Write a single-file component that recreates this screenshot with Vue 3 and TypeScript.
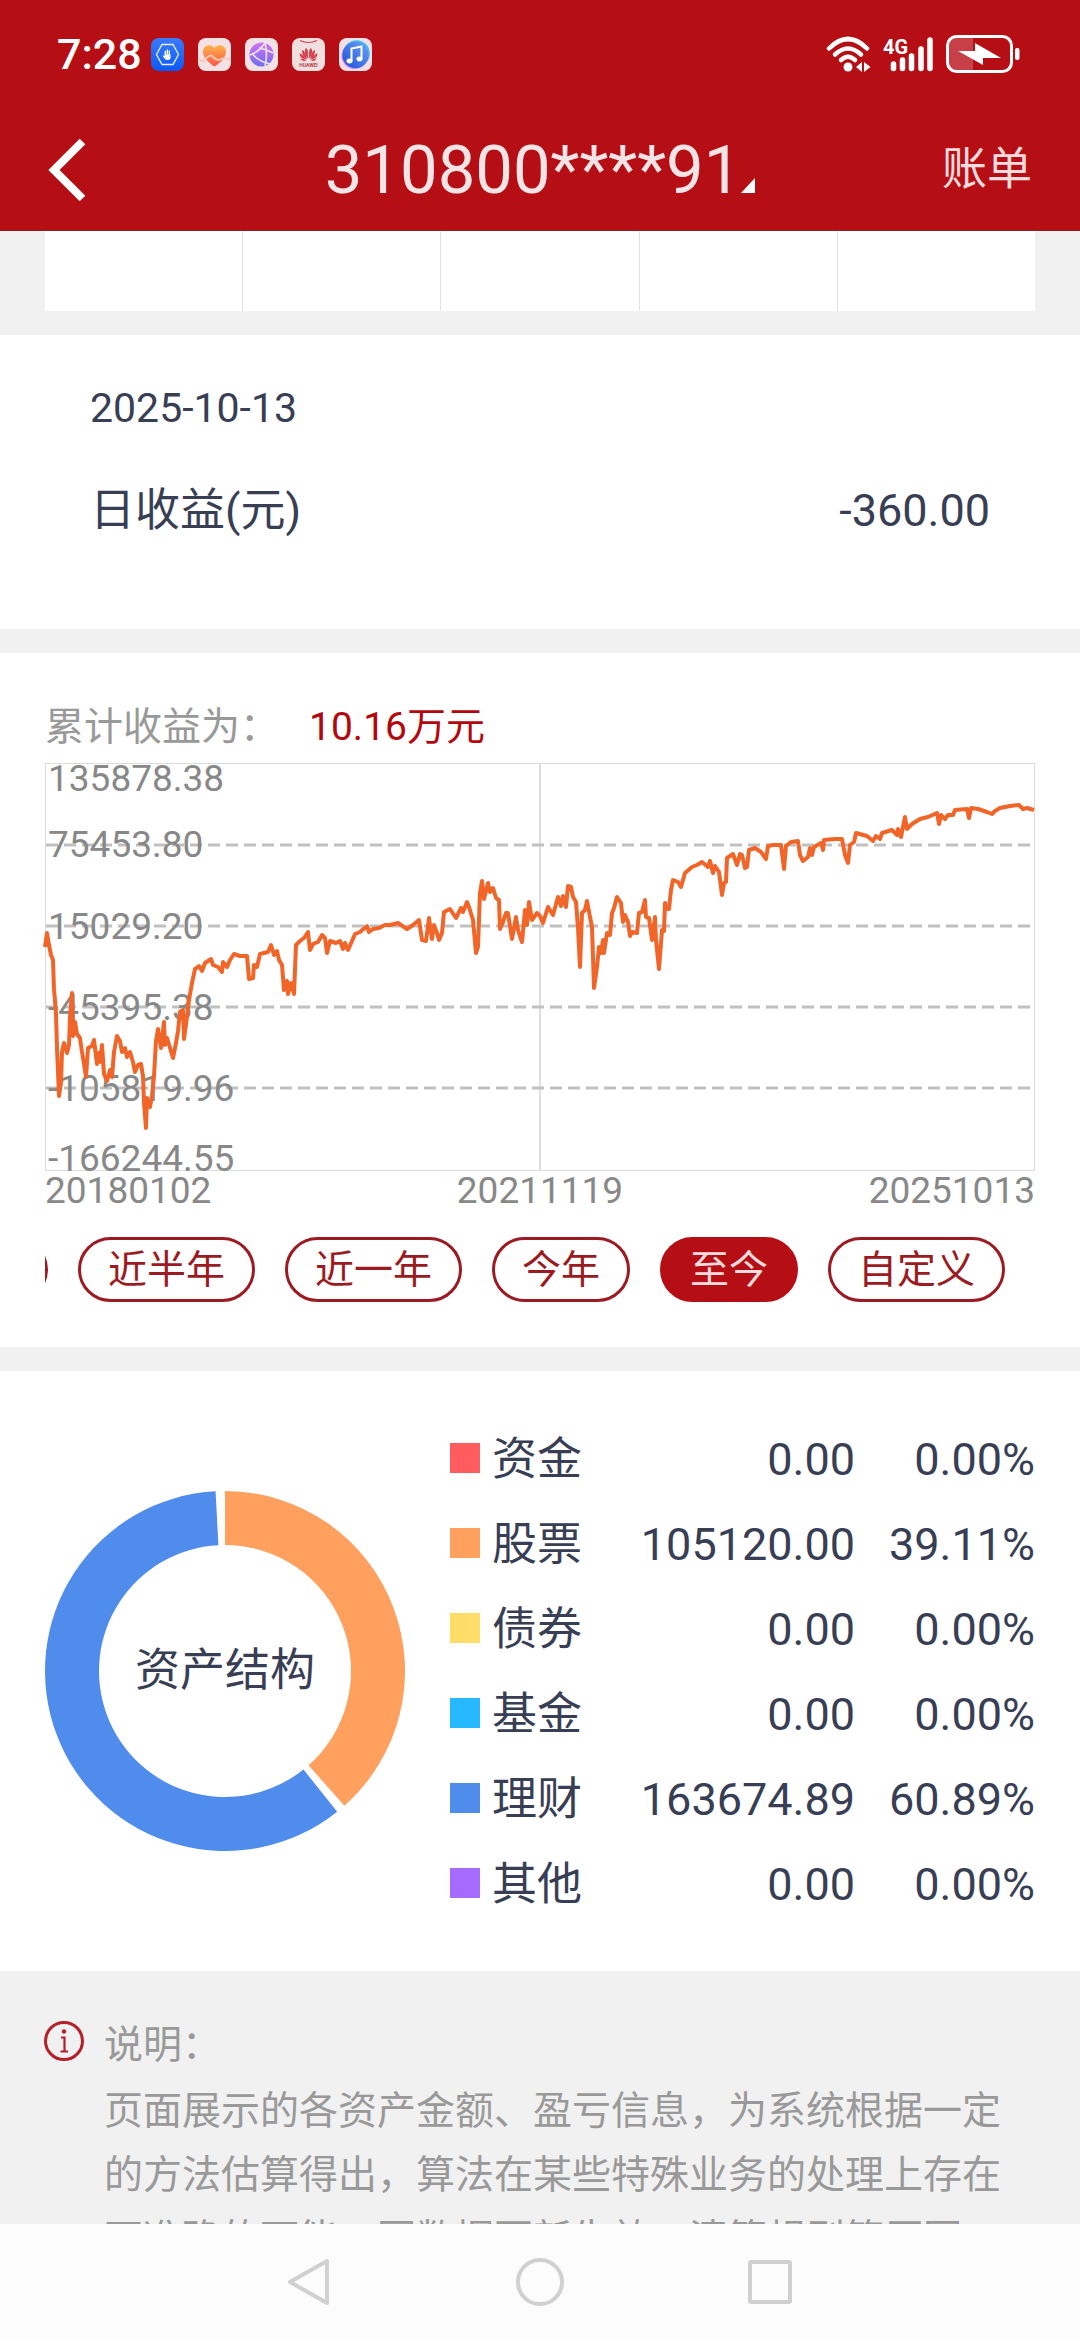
<script setup lang="ts">
import { ref } from 'vue'

interface Asset {
  name: string
  amount: string
  share: string
  color: string
}

const ranges: string[] = ['近三月', '近半年', '近一年', '今年', '至今', '自定义']
const activeRange = ref<string>('至今')

const assets: Asset[] = [
  { name: '资金', amount: '0.00', share: '0.00%', color: '#ff5c5f' },
  { name: '股票', amount: '105120.00', share: '39.11%', color: '#ffa05f' },
  { name: '债券', amount: '0.00', share: '0.00%', color: '#ffdd66' },
  { name: '基金', amount: '0.00', share: '0.00%', color: '#27b9ff' },
  { name: '理财', amount: '163674.89', share: '60.89%', color: '#4f8cec' },
  { name: '其他', amount: '0.00', share: '0.00%', color: '#a56bff' },
]

const gridLines: number[] = [82, 163, 244, 325]
const axisLabels: { text: string; y: number }[] = [
  { text: '135878.38', y: 28 },
  { text: '75453.80', y: 94 },
  { text: '15029.20', y: 176 },
  { text: '-45395.38', y: 257 },
  { text: '-105819.96', y: 338 },
  { text: '-166244.55', y: 408 },
]
const dates: string[] = ['20180102', '20211119', '20251013']

const profitLine = `
0,184 2,170 4,182 6,192 8,197 9,227 10,237 11,251 12,285 14,333 16,320 17,289 19,280 22,290 24,282 25,254
27,230 28,273 30,259 32,271 35,275 37,289 39,301 41,314 43,285 47,283 49,277 52,301 54,290 55,299 57,282
59,311 62,318 65,307 67,314 69,289 72,273 75,278 77,289 80,285 82,294 85,289 88,299 90,309 93,302 96,301
98,313 99,340 101,365 102,335 105,344 107,333 109,313 111,278 113,266 116,285 119,259 120,282 122,275
125,285 128,295 131,280 133,268 135,249 138,247 139,276 142,254 144,237 147,220 150,206 154,203 157,208
160,200 166,196 168,202 173,204 177,209 178,199 182,204 185,197 189,191 195,193 202,193 204,216 208,215
209,202 212,204 215,191 223,189 226,182 229,192 232,188 234,197 237,202 239,227 242,218 243,231 246,220
249,231 251,182 255,178 259,175 263,169 265,187 268,181 273,179 277,172 280,175 282,190 285,178 291,180
295,178 298,186 300,180 303,187 307,178 310,171 315,169 322,163 324,169 328,166 334,165 340,162 345,162
353,160 362,166 368,162 374,157 377,177 381,178 384,155 387,176 389,162 392,170 394,177 397,170 399,149
405,146 411,155 416,145 418,149 422,139 424,144 428,157 431,190 433,184 435,130 437,118 439,136 443,120
445,129 448,125 451,135 454,137 455,166 458,159 461,150 463,150 467,176 471,154 473,167 477,179 480,147
482,162 484,139 487,157 492,150 495,153 498,160 503,144 508,152 513,134 516,143 518,133 521,144 523,123
526,124 528,134 531,139 533,165 535,204 537,150 540,147 542,138 545,154 547,164 548,194 549,225 552,204
554,184 556,190 558,177 559,190 562,170 565,172 567,150 569,145 572,134 576,140 578,159 580,152 583,159
585,173 587,169 592,170 594,150 597,149 600,137 601,154 604,155 607,177 610,154 611,177 614,206 617,167
619,168 620,140 622,146 624,146 626,127 628,117 633,119 636,124 640,110 647,104 652,102 657,99 663,104
665,98 668,110 670,103 674,109 676,124 677,132 679,120 681,119 682,95 688,91 692,102 695,91 697,92
700,105 702,104 704,87 710,85 716,89 721,96 723,83 728,82 736,82 739,106 741,83 746,79 753,78 755,92
758,98 763,94 765,85 767,92 769,84 776,80 778,87 779,77 790,76 797,76 800,92 803,100 805,82 809,79
811,70 822,73 828,78 831,73 835,76 837,70 847,67 852,72 853,66 856,74 860,54 862,66 867,61 875,56
883,54 892,50 894,61 896,52 900,56 903,52 908,52 910,47 922,46 924,55 926,45 933,46 942,49 947,51
950,48 955,45 965,43 974,42 978,46 982,45 989,47`

const gapDegrees = 3
const donutSlices = (() => {
  const held = assets.filter((a) => parseFloat(a.share) > 0)
  const usable = 360 - gapDegrees * held.length
  const point = (deg: number, r: number): string => {
    const rad = (deg * Math.PI) / 180
    return `${(180 + r * Math.sin(rad)).toFixed(2)} ${(180 - r * Math.cos(rad)).toFixed(2)}`
  }
  let start = 0
  return held.map((a) => {
    const end = start + (parseFloat(a.share) / 100) * usable
    const large = end - start > 180 ? 1 : 0
    const d =
      `M${point(start, 180)} A180 180 0 ${large} 1 ${point(end, 180)} ` +
      `L${point(end, 126)} A126 126 0 ${large} 0 ${point(start, 126)} Z`
    start = end + gapDegrees
    return { d, color: a.color }
  })
})()
</script>

<template>
  <div class="screen">
    <header class="header">
      <div class="status">
        <span class="clock">7:28</span>
        <div class="apps">
          <svg class="app-icon" viewBox="0 0 33 33" aria-hidden="true">
            <defs>
              <linearGradient id="guard" x1="0" y1="0" x2="0" y2="1">
                <stop offset="0" stop-color="#3b7bfa" />
                <stop offset="1" stop-color="#0b59f5" />
              </linearGradient>
            </defs>
            <rect width="33" height="33" rx="8" fill="url(#guard)" />
            <path d="M11 6.500h11l5.500 10-5.500 10H11l-5.500-10z" fill="none" stroke="#e8f1ff" stroke-width="1.300" />
            <path d="M14.300 17v-3.500M16.300 16v-4M18.300 17v-4" stroke="#fff" stroke-width="1.400" stroke-linecap="round" />
            <path d="M13.600 16.500H19.500v3q0 2.500-3 2.500-2 0-2.800-1.500L11.500 18q.8-1 2.100.3z" fill="#fff" />
          </svg>
          <svg class="app-icon" viewBox="0 0 33 33" aria-hidden="true">
            <defs>
              <linearGradient id="heart" x1="0" y1="0" x2="0" y2="1">
                <stop offset="0" stop-color="#fdb347" />
                <stop offset="1" stop-color="#fb5548" />
              </linearGradient>
            </defs>
            <rect width="33" height="33" rx="8" fill="#f3e1e3" />
            <path d="M16.500 28.500C9 23.500 5 18.500 5 13.500 5 7 13 5 16.500 10 20 5 28 7 28 13.500c0 5-4 10-11.500 15z" fill="url(#heart)" />
            <path d="M1 20q2 4.500 5 2.500c3-2 5-7 8-4.500s5 5.500 8 3.500 4-1 10-.5" fill="none" stroke="#f6c9b8" stroke-width="1.800" />
          </svg>
          <svg class="app-icon" viewBox="0 0 33 33" aria-hidden="true">
            <defs>
              <linearGradient id="globe" x1="0" y1="0" x2="0" y2="1">
                <stop offset="0" stop-color="#cf74ef" />
                <stop offset="1" stop-color="#6d6cf0" />
              </linearGradient>
            </defs>
            <rect width="33" height="33" rx="8" fill="#f3e1e3" />
            <circle cx="16.500" cy="16.500" r="12" fill="url(#globe)" />
            <path d="M5 17Q14 14 20 5M7 15q5 8 18 11M20 5q3 12 0 23M14 10q7 1 14 5" fill="none" stroke="#f3e1f3" stroke-width="1.600" />
          </svg>
          <svg class="app-icon" viewBox="0 0 33 33" aria-hidden="true">
            <rect width="33" height="33" rx="8" fill="#f1dfe0" />
            <path d="M8 2.500q8.500 4 17 0" fill="none" stroke="#cf3f4c" stroke-width="1.200" />
            <g fill="#d63e4b">
              <path d="M16 21q-4.500-6-2.500-10.500 3-1.500 2.500 10.500zM17 21q4.500-6 2.500-10.500-3-1.500-2.500 10.500z" />
              <path d="M15 21.500Q9 17 10.200 12q3 .5 4.800 9.500zM18 21.500q6-4.500 4.800-9.500-3 .5-4.800 9.500z" />
              <path d="M14.500 22Q7.500 20 7.500 15.500q3.500.5 7 6.500zM18.500 22q7-2 7-6.500-3.500.5-7 6.500z" />
              <path d="M14 22.700q-4.500 1-5.700-2.200 3-.5 5.700 2.200zM19 22.700q4.500 1 5.700-2.200-3-.5-5.700 2.200z" />
            </g>
            <text x="16.500" y="28.500" text-anchor="middle" class="brand">HUAWEI</text>
          </svg>
          <svg class="app-icon" viewBox="0 0 33 33" aria-hidden="true">
            <defs>
              <linearGradient id="music" x1="1" y1="0" x2="0" y2="1">
                <stop offset="0" stop-color="#6fa0f5" />
                <stop offset="1" stop-color="#1a50d8" />
              </linearGradient>
            </defs>
            <rect width="33" height="33" rx="8" fill="#f3dfe6" />
            <circle cx="15.500" cy="18" r="13" fill="#e58af0" />
            <circle cx="17.500" cy="15.500" r="13.300" fill="#36c3ef" />
            <circle cx="16.500" cy="17" r="13.200" fill="url(#music)" />
            <path d="M12.500 23V10.500l10-2V21" fill="none" stroke="#fff" stroke-width="2" />
            <ellipse cx="10.500" cy="23" rx="3" ry="2.400" fill="#fff" />
            <ellipse cx="20.500" cy="21" rx="3" ry="2.400" fill="#fff" />
          </svg>
        </div>
        <div class="signals">
          <svg class="wifi" viewBox="0 0 45 36" aria-hidden="true">
            <g fill="none" stroke="#fff" stroke-width="4.500" stroke-linecap="round">
              <path d="M3 12.500Q22 -6.500 41 12.500" />
              <path d="M9 18.500q13-12 26 0" />
              <path d="M15 24q7-6.500 14 0" />
            </g>
            <circle cx="22" cy="31" r="4.500" fill="#fff" />
            <path d="M30 31l6-5v10zM38 26l6.500 5-6.500 5z" fill="#fff" />
          </svg>
          <svg class="cell" viewBox="0 0 51 36" aria-hidden="true">
            <text x="0" y="18" class="network">4G</text>
            <g stroke="#fff" stroke-width="5.500" stroke-linecap="round">
              <path d="M10.500 28v4.500M19.500 24v8.500M28.500 20v12.500M38 13v19.500M47 4v28.500" />
            </g>
          </svg>
          <svg class="battery" viewBox="0 0 74 38" aria-hidden="true">
            <path d="M3 10q0-7 7-7h17v32H10q-7 0-7-7z" fill="#c74048" />
            <rect x="1.500" y="1.500" width="64" height="35" rx="9" fill="none" stroke="#fff" stroke-width="3" />
            <rect x="69" y="13" width="4.500" height="12" rx="2" fill="#fff" />
            <path d="M12 16h17V8l26 15H37v7z" fill="#fff" />
          </svg>
        </div>
      </div>
      <div class="titlebar">
        <button class="back" type="button" aria-label="返回">
          <svg viewBox="0 0 38 64" aria-hidden="true">
            <path d="M34.500 3.500L6 32l28.500 28.500" fill="none" stroke="#fff" stroke-width="8" />
          </svg>
        </button>
        <button class="account" type="button">
          <span>310800****91</span>
          <svg viewBox="0 0 14 15" aria-hidden="true"><path d="M14 0v15H0z" fill="#fff" /></svg>
        </button>
        <a class="bill" href="#">账单</a>
      </div>
    </header>

    <main class="content">
      <div class="calendar-row">
        <span v-for="n in 5" :key="n" class="day"></span>
      </div>

      <section class="daily">
        <div class="daily-date">2025-10-13</div>
        <div class="daily-row">
          <span>日收益(元)</span>
          <span>-360.00</span>
        </div>
      </section>

      <section class="trend">
        <div class="trend-head">
          <span>累计收益为：</span>
          <strong>10.16万元</strong>
        </div>
        <svg class="plot" viewBox="0 0 990 408" role="img" aria-label="累计收益走势">
          <rect x="0.500" y="0.500" width="989" height="407" fill="none" stroke="#dcdcdc" />
          <path d="M495 0V408" stroke="#dedede" stroke-width="2" />
          <path v-for="y in gridLines" :key="y" :d="`M1 ${y}H986`" class="grid-line" />
          <text v-for="l in axisLabels" :key="l.text" x="3" :y="l.y" class="axis">{{ l.text }}</text>
          <polyline :points="profitLine" class="profit" />
        </svg>
        <div class="dates">
          <span v-for="d in dates" :key="d">{{ d }}</span>
        </div>
        <div class="ranges">
          <button
            v-for="r in ranges"
            :key="r"
            type="button"
            class="chip"
            :class="{ active: r === activeRange }"
            @click="activeRange = r"
          >{{ r }}</button>
        </div>
      </section>

      <section class="assets">
        <div class="donut">
          <svg viewBox="0 0 360 360" aria-hidden="true">
            <path v-for="s in donutSlices" :key="s.color" :d="s.d" :fill="s.color" />
          </svg>
          <span class="donut-label">资产结构</span>
        </div>
        <table class="legend">
          <tbody>
            <tr v-for="a in assets" :key="a.name">
              <th scope="row">
                <span class="name"><i class="swatch" :style="{ background: a.color }"></i>{{ a.name }}</span>
              </th>
              <td>{{ a.amount }}</td>
              <td class="share">{{ a.share }}</td>
            </tr>
          </tbody>
        </table>
      </section>

      <section class="note">
        <svg class="info" viewBox="0 0 40 40" aria-hidden="true">
          <circle cx="20" cy="20" r="18.500" fill="none" stroke="#b3202a" stroke-width="3" />
          <circle cx="20" cy="10.500" r="2.200" fill="#b3202a" />
          <path d="M17 16.500h3.500V30M16.500 30.500h7.500" fill="none" stroke="#b3202a" stroke-width="2.200" />
        </svg>
        <div class="note-text">
          <div class="note-title">说明：</div>
          <p>页面展示的各资产金额、盈亏信息，为系统根据一定的方法估算得出，算法在某些特殊业务的处理上存在不准确的可能，因数据更新失效、清算规则等原因，</p>
        </div>
      </section>
    </main>

    <nav class="navbar">
      <button type="button" aria-label="返回上一页">
        <svg viewBox="0 0 48 48"><path d="M41 3v42L4 24z" /></svg>
      </button>
      <button type="button" aria-label="主屏幕">
        <svg viewBox="0 0 48 48"><circle cx="24" cy="24" r="22" /></svg>
      </button>
      <button type="button" aria-label="最近任务">
        <svg viewBox="0 0 48 48"><rect x="4" y="4" width="40" height="40" rx="1" /></svg>
      </button>
    </nav>
  </div>
</template>

<style>
body {
  background: #f1f1f1;
}
</style>

<style scoped>
.screen {
  display: flex;
  flex-direction: column;
  height: 100vh;
  background: #f1f1f1;
  color: #383e54;
  font-family: Roboto, "Noto Sans CJK SC", sans-serif;
  font-size: 45px;
}

button {
  margin: 0;
  padding: 0;
  border: 0;
  background: none;
  color: inherit;
  font: inherit;
}

svg {
  display: block;
}

.header {
  flex: none;
  background: #b50f15;
  border-bottom: 1px solid #8c2026;
  color: #fff;
}

.status {
  display: flex;
  align-items: center;
  height: 108px;
  padding: 0 60px 0 57px;
}

.clock {
  width: 94px;
  font-size: 43px;
  font-weight: 500;
  line-height: 60px;
}

.apps {
  display: flex;
  gap: 14px;
}

.app-icon {
  width: 33px;
  height: 33px;
}

.brand {
  fill: #b8404a;
  font-size: 5px;
  font-weight: 700;
}

.signals {
  display: flex;
  align-items: center;
  gap: 12px;
  margin-left: auto;
}

.wifi {
  width: 45px;
  height: 36px;
}

.cell {
  width: 51px;
  height: 36px;
}

.network {
  fill: #fff;
  font-size: 20px;
  font-weight: 700;
}

.battery {
  width: 74px;
  height: 38px;
}

.titlebar {
  display: grid;
  grid-template-columns: 1fr auto 1fr;
  align-items: center;
  height: 120px;
  padding: 2px 48px 0;
}

.back {
  justify-self: start;
}

.back svg {
  width: 38px;
  height: 64px;
}

.account {
  display: flex;
  align-items: baseline;
  color: #f4e4e6;
  font-size: 67px;
  line-height: 80px;
}

.account svg {
  width: 14px;
  height: 15px;
}

.bill {
  justify-self: end;
  color: #fbdcde;
  line-height: 60px;
  text-decoration: none;
}

.content {
  flex: 1;
  min-height: 0;
  overflow: hidden;
}

.calendar-row {
  display: flex;
  height: 80px;
  margin: 0 45px 24px;
  background: #fff;
}

.day {
  flex: 1;
}

.day + .day {
  border-left: 1px solid #e2e2e2;
}

.daily {
  padding: 43px 90px 85px;
  background: #fff;
}

.daily-date {
  margin-bottom: 40px;
  font-size: 41px;
  line-height: 60px;
}

.daily-row {
  display: flex;
  justify-content: space-between;
  line-height: 66px;
}

.trend {
  margin: 24px 0;
  padding: 44px 45px 45px;
  background: #fff;
}

.trend-head {
  display: flex;
  gap: 30px;
  margin-bottom: 6px;
  color: #999;
  font-size: 39px;
  line-height: 60px;
}

.trend-head strong {
  color: #b4060d;
  font-weight: 400;
}

.plot {
  width: 100%;
  overflow: visible;
}

.grid-line {
  stroke: #c0c0c0;
  stroke-width: 3;
  stroke-dasharray: 12 6;
}

.axis {
  fill: #888;
  font-size: 37px;
}

.profit {
  fill: none;
  stroke: #f26529;
  stroke-width: 4;
  stroke-linejoin: round;
}

.dates {
  display: flex;
  justify-content: space-between;
  margin-bottom: 26px;
  color: #888;
  font-size: 37px;
  line-height: 40px;
}

.ranges {
  display: flex;
  justify-content: flex-end;
  gap: 30px;
  padding-right: 30px;
  overflow: hidden;
}

.chip {
  flex: none;
  height: 65px;
  padding: 2px 27px 0;
  border: 3px solid #9c1a21;
  border-radius: 33px;
  color: #9c1a21;
  font-size: 39px;
  line-height: 57px;
}

.chip.active {
  border-color: #b50f15;
  background: #b50f15;
  color: #fbdcde;
}

.assets {
  display: flex;
  align-items: center;
  gap: 45px;
  padding: 45px;
  background: #fff;
}

.donut {
  display: grid;
  flex: none;
  place-items: center;
  width: 360px;
}

.donut svg,
.donut-label {
  grid-area: 1 / 1;
}

.donut svg {
  width: 100%;
}

.donut-label {
  line-height: 60px;
}

.legend {
  flex: 1;
  border-collapse: collapse;
}

.legend tr {
  height: 85px;
}

.legend th,
.legend td {
  padding: 2px 0 0;
  font-weight: 400;
  line-height: 60px;
  text-align: right;
}

.name {
  display: flex;
  align-items: center;
  gap: 12px;
}

.swatch {
  width: 30px;
  height: 30px;
  margin-bottom: 4px;
}

.legend .share {
  width: 180px;
}

.note {
  display: flex;
  gap: 20px;
  padding: 42px 60px 40px 44px;
  color: #999;
  font-size: 39px;
  line-height: 64px;
}

.info {
  flex: none;
  width: 40px;
  height: 40px;
  margin-top: 8px;
}

.note-text {
  flex: 1;
}

.note p {
  margin: 2px 0 0;
}

.navbar {
  display: flex;
  flex: none;
  align-items: center;
  justify-content: center;
  gap: 182px;
  height: 116px;
  background: #fcfcfc;
}

.navbar svg {
  width: 48px;
  height: 48px;
  fill: none;
  stroke: #d0d0d0;
  stroke-width: 4;
  stroke-linejoin: round;
}
</style>
